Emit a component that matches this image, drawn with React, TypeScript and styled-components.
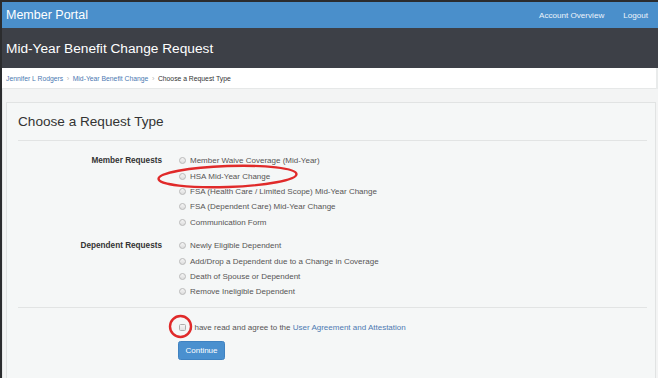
import { FC } from 'react';
import styled, { createGlobalStyle } from 'styled-components';

const GlobalStyle = createGlobalStyle`
  html, body {
    margin: 0;
    padding: 0;
    background: #2b2c2e;
    overflow: hidden;
  }
  body {
    font-family: "Liberation Sans", Arial, sans-serif;
  }
`;

const memberRequests = [
  'Member Waive Coverage (Mid-Year)',
  'HSA Mid-Year Change',
  'FSA (Health Care / Limited Scope) Mid-Year Change',
  'FSA (Dependent Care) Mid-Year Change',
  'Communication Form',
];

const dependentRequests = [
  'Newly Eligible Dependent',
  'Add/Drop a Dependent due to a Change in Coverage',
  'Death of Spouse or Dependent',
  'Remove Ineligible Dependent',
];

const RequestGroup: FC<{ label: string; options: string[]; spaced?: boolean }> = ({
  label,
  options,
  spaced,
}) => (
  <Group $spaced={spaced}>
    <GroupLabel>{label}</GroupLabel>
    <Options>
      {options.map((option) => (
        <Option key={option}>
          <Radio />
          {option}
        </Option>
      ))}
    </Options>
  </Group>
);

export default function App() {
  return (
    <>
      <GlobalStyle />
      <Page>
        <NavBar>
          <Brand>Member Portal</Brand>
          <NavLinks>
            <NavLink>Account Overview</NavLink>
            <NavLink>Logout</NavLink>
          </NavLinks>
        </NavBar>
        <TitleBar>Mid-Year Benefit Change Request</TitleBar>
        <Breadcrumb>
          <Crumb href="#">Jennifer L Rodgers</Crumb>
          <Separator>›</Separator>
          <Crumb href="#">Mid-Year Benefit Change</Crumb>
          <Separator>›</Separator>
          <Current>Choose a Request Type</Current>
        </Breadcrumb>
        <Content>
          <Panel>
            <Heading>Choose a Request Type</Heading>
            <Rule />
            <RequestGroup label="Member Requests" options={memberRequests} />
            <RequestGroup label="Dependent Requests" options={dependentRequests} spaced />
            <Rule $bottom />
            <Agreement>
              <Checkbox />
              I have read and agree to the&nbsp;<AgreementLink href="#">User Agreement and Attestation</AgreementLink>
            </Agreement>
            <ButtonRow>
              <ContinueButton>Continue</ContinueButton>
            </ButtonRow>
          </Panel>
        </Content>
        <Annotations width="658" height="378" viewBox="0 0 658 378">
          <ellipse
            cx="227.5"
            cy="176.5"
            rx="69"
            ry="10.5"
            transform="rotate(-2 227.5 176.5)"
            fill="none"
            stroke="#e02a2a"
            strokeWidth="2.4"
          />
          <circle cx="180.5" cy="326.5" r="10.5" fill="none" stroke="#e02a2a" strokeWidth="2.4" />
        </Annotations>
      </Page>
    </>
  );
}

const Page = styled.div`
  position: relative;
  width: 656px;
  height: 376px;
  margin: 2px 0 0 2px;
  background: #e9ebeb;
  overflow: hidden;
`;

const NavBar = styled.header`
  display: flex;
  align-items: center;
  justify-content: space-between;
  height: 26px;
  padding: 0 10px 0 4px;
  background: #4a8fcb;
  color: #fff;
`;

const Brand = styled.div`
  font-size: 12.5px;
`;

const NavLinks = styled.nav`
  display: flex;
  gap: 19px;
`;

const NavLink = styled.a`
  font-size: 8.1px;
  color: #eef4fb;
`;

const TitleBar = styled.h1`
  margin: 0;
  height: 40px;
  display: flex;
  align-items: center;
  padding: 0 4px;
  background: #3d4047;
  color: #fff;
  font-size: 13.7px;
  font-weight: normal;
`;

const Breadcrumb = styled.div`
  display: flex;
  align-items: center;
  gap: 3.5px;
  height: 20px;
  padding: 0 4px;
  margin-right: 2px;
  background: #fff;
  border-bottom: 1px solid #e6e8e8;
  font-size: 6.8px;
`;

const Crumb = styled.a`
  color: #4d7ab2;
  text-decoration: none;
`;

const Separator = styled.span`
  color: #b8b8b8;
  font-size: 7.5px;
`;

const Current = styled.span`
  color: #333;
`;

const Content = styled.main`
  padding: 13px 2px 0 3px;
  background: #f3f4f4;
  height: 300px;
  border-left: 1px solid #e4e6e6;
`;

const Panel = styled.section`
  height: 320px;
  padding: 0 8px 0 11px;
  background: #f5f7f7;
  border: 1px solid #e1e3e3;
`;

const Heading = styled.h2`
  margin: 0;
  padding: 10px 0 0;
  height: 27px;
  font-size: 13.6px;
  line-height: 17px;
  font-weight: normal;
  color: #333;
`;

const Rule = styled.hr<{ $bottom?: boolean }>`
  margin: ${({ $bottom }) => ($bottom ? '7px 0 0' : '0 0 12px')};
  border: 0;
  border-top: 1px solid #e2e4e4;
`;

const Group = styled.div<{ $spaced?: boolean }>`
  display: grid;
  grid-template-columns: 144px 1fr;
  column-gap: 17px;
  margin-top: ${({ $spaced }) => ($spaced ? '8px' : '0')};
`;

const GroupLabel = styled.div`
  text-align: right;
  font-size: 8.2px;
  line-height: 15.4px;
  font-weight: bold;
  color: #333;
`;

const Options = styled.div`
  display: flex;
  flex-direction: column;
`;

const Option = styled.label`
  display: flex;
  align-items: center;
  height: 15.4px;
  font-size: 8px;
  color: #555;
`;

const Radio = styled.span`
  width: 5px;
  height: 5px;
  margin-right: 4px;
  border-radius: 50%;
  border: 1px solid #b9b9b9;
  background: linear-gradient(#f4f4f4, #dedede);
`;

const Agreement = styled.label`
  display: flex;
  align-items: center;
  height: 15.4px;
  margin-top: 12px;
  margin-left: 161px;
  font-size: 8px;
  color: #555;
`;

const Checkbox = styled.span`
  width: 5px;
  height: 5px;
  margin-right: 4px;
  border-radius: 1.5px;
  border: 1px solid #aeaeae;
  background: linear-gradient(#f6f6f6, #e2e2e2);
`;

const AgreementLink = styled.a`
  color: #4d7ab2;
  text-decoration: none;
`;

const ButtonRow = styled.div`
  margin: 6px 0 0 160px;
  line-height: 0;
`;

const ContinueButton = styled.button`
  width: 47px;
  height: 19px;
  padding: 0;
  border: 1px solid #3f82c1;
  border-radius: 2.5px;
  background: #4a90cf;
  color: #fff;
  font-family: inherit;
  font-size: 8px;
  line-height: 17px;
`;

const Annotations = styled.svg`
  position: absolute;
  top: -2px;
  left: -2px;
  pointer-events: none;
`;
